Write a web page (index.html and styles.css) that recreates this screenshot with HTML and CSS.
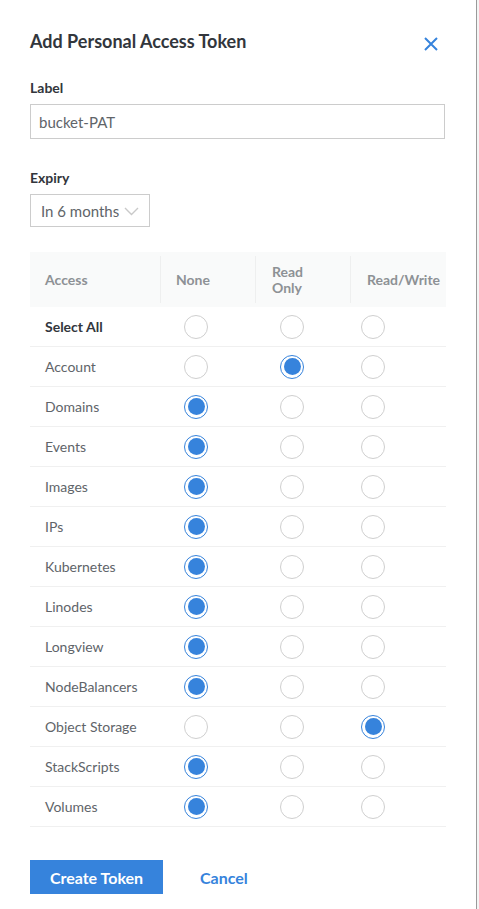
FILE: index.html
```html
<!DOCTYPE html>
<html lang="en">
<head>
<meta charset="utf-8">
<title>Add Personal Access Token</title>
<link rel="stylesheet" href="styles.css">
</head>
<body>
<div class="drawer">
  <div class="header">
    <h2 class="title">Add Personal Access Token</h2>
    <button class="close" aria-label="Close">
      <svg width="14" height="14" viewBox="0 0 14 14"><path d="M1 1 L13 13 M13 1 L1 13" stroke="#3683dc" stroke-width="2" fill="none"/></svg>
    </button>
  </div>

  <label class="field-label">Label</label>
  <div class="input">bucket-PAT</div>

  <label class="field-label expiry-label">Expiry</label>
  <div class="select">
    <span>In 6 months</span>
    <svg class="chev" width="15" height="9" viewBox="0 0 15 9"><path d="M1 1 L7.5 7.5 L14 1" stroke="#c9c9c9" stroke-width="1.4" fill="none"/></svg>
  </div>

  <div class="table">
    <div class="thead">
      <div class="th th-access">Access</div>
      <div class="th">None</div>
      <div class="th th-ro">Read<br>Only</div>
      <div class="th">Read/Write</div>
    </div>

    <div class="row"><div class="name bold">Select All</div><div class="c c1"><span class="radio"></span></div><div class="c c2"><span class="radio"></span></div><div class="c c3"><span class="radio"></span></div></div>
    <div class="row"><div class="name">Account</div><div class="c c1"><span class="radio"></span></div><div class="c c2"><span class="radio on"></span></div><div class="c c3"><span class="radio"></span></div></div>
    <div class="row"><div class="name">Domains</div><div class="c c1"><span class="radio on"></span></div><div class="c c2"><span class="radio"></span></div><div class="c c3"><span class="radio"></span></div></div>
    <div class="row"><div class="name">Events</div><div class="c c1"><span class="radio on"></span></div><div class="c c2"><span class="radio"></span></div><div class="c c3"><span class="radio"></span></div></div>
    <div class="row"><div class="name">Images</div><div class="c c1"><span class="radio on"></span></div><div class="c c2"><span class="radio"></span></div><div class="c c3"><span class="radio"></span></div></div>
    <div class="row"><div class="name">IPs</div><div class="c c1"><span class="radio on"></span></div><div class="c c2"><span class="radio"></span></div><div class="c c3"><span class="radio"></span></div></div>
    <div class="row"><div class="name">Kubernetes</div><div class="c c1"><span class="radio on"></span></div><div class="c c2"><span class="radio"></span></div><div class="c c3"><span class="radio"></span></div></div>
    <div class="row"><div class="name">Linodes</div><div class="c c1"><span class="radio on"></span></div><div class="c c2"><span class="radio"></span></div><div class="c c3"><span class="radio"></span></div></div>
    <div class="row"><div class="name">Longview</div><div class="c c1"><span class="radio on"></span></div><div class="c c2"><span class="radio"></span></div><div class="c c3"><span class="radio"></span></div></div>
    <div class="row"><div class="name">NodeBalancers</div><div class="c c1"><span class="radio on"></span></div><div class="c c2"><span class="radio"></span></div><div class="c c3"><span class="radio"></span></div></div>
    <div class="row"><div class="name">Object Storage</div><div class="c c1"><span class="radio"></span></div><div class="c c2"><span class="radio"></span></div><div class="c c3"><span class="radio on"></span></div></div>
    <div class="row"><div class="name">StackScripts</div><div class="c c1"><span class="radio on"></span></div><div class="c c2"><span class="radio"></span></div><div class="c c3"><span class="radio"></span></div></div>
    <div class="row"><div class="name">Volumes</div><div class="c c1"><span class="radio on"></span></div><div class="c c2"><span class="radio"></span></div><div class="c c3"><span class="radio"></span></div></div>
  </div>

  <div class="actions">
    <button class="btn-primary">Create Token</button>
    <button class="btn-link">Cancel</button>
  </div>
</div>
</body>
</html>
```

FILE: styles.css
```css
* { box-sizing: border-box; }
html, body { margin: 0; padding: 0; }
body {
  background: #f4f4f4;
  font-family: Lato, "Noto Sans", sans-serif;
  color: #32363c;
}
.drawer {
  width: 477px;
  min-height: 909px;
  background: #fff;
  border-right: 1px solid #9a9a9a;
  padding: 30px 31px 0 30px;
}
.header {
  display: flex;
  justify-content: space-between;
  align-items: flex-start;
  height: 22px;
}
.title {
  margin: 0;
  font-size: 18px;
  line-height: 22px;
  font-weight: 700;
  color: #32363c;
}
.close {
  border: 0;
  background: none;
  padding: 0;
  margin: 7px 7px 0 0;
  width: 14px;
  height: 14px;
  display: flex;
}
.field-label {
  display: block;
  margin-top: 27px;
  font-size: 14px;
  line-height: 17px;
  font-weight: 700;
  color: #32363c;
}
.expiry-label { margin-top: 30px; }
.input {
  margin-top: 8px;
  height: 35px;
  width: 415px;
  border: 1px solid #ccc;
  padding: 0 8px;
  display: flex;
  align-items: center;
  font-size: 15px;
  color: #606469;
}
.select {
  margin-top: 8px;
  height: 33px;
  width: 120px;
  border: 1px solid #ccc;
  padding: 0 10px;
  display: flex;
  align-items: center;
  justify-content: space-between;
  font-size: 15px;
  color: #606469;
}
.chev { margin-top: 2px; }
.table {
  margin-top: 25px;
  width: 416px;
}
.thead {
  display: grid;
  grid-template-columns: 130px 95px 95px 96px;
  height: 55px;
  background: #f9fafa;
  padding: 4px 0;
  align-items: stretch;
}
.th {
  display: flex;
  align-items: center;
  font-size: 14px;
  line-height: 16px;
  font-weight: 700;
  color: #8d9195;
  padding-left: 15px;
  border-left: 1px solid #eeefef;
}
.th-access { border-left: 0; }
.th-ro { padding-left: 16px; }
.th:last-child { padding-left: 16px; }
.row {
  display: grid;
  grid-template-columns: 130px 95px 95px 96px;
  height: 40px;
  border-bottom: 1px solid #f0f0f0;
  align-items: center;
}
.name {
  padding-left: 15px;
  font-size: 14px;
  color: #606469;
}
.name.bold { font-weight: 700; color: #32363c; }
.c { display: flex; align-items: center; }
.c1 { padding-left: 24px; }
.c2 { padding-left: 25px; }
.c3 { padding-left: 11px; }
.radio {
  width: 24px;
  height: 24px;
  border-radius: 50%;
  border: 1px solid #cfcfcf;
  background: #fff;
  display: flex;
  align-items: center;
  justify-content: center;
}
.radio.on { border-color: #3683dc; }
.radio.on::after {
  content: "";
  width: 17px;
  height: 17px;
  border-radius: 50%;
  background: #3683dc;
}
.actions {
  margin-top: 33px;
  display: flex;
  align-items: center;
  gap: 37px;
}
.btn-primary {
  height: 34px;
  width: 133px;
  border: 0;
  background: #3683dc;
  color: #fff;
  font-family: Lato, "Noto Sans", sans-serif;
  font-size: 16px;
  font-weight: 700;
  padding: 0;
}
.btn-link {
  border: 0;
  background: none;
  padding: 0;
  color: #3683dc;
  font-family: Lato, "Noto Sans", sans-serif;
  font-size: 16px;
  font-weight: 700;
}
```
